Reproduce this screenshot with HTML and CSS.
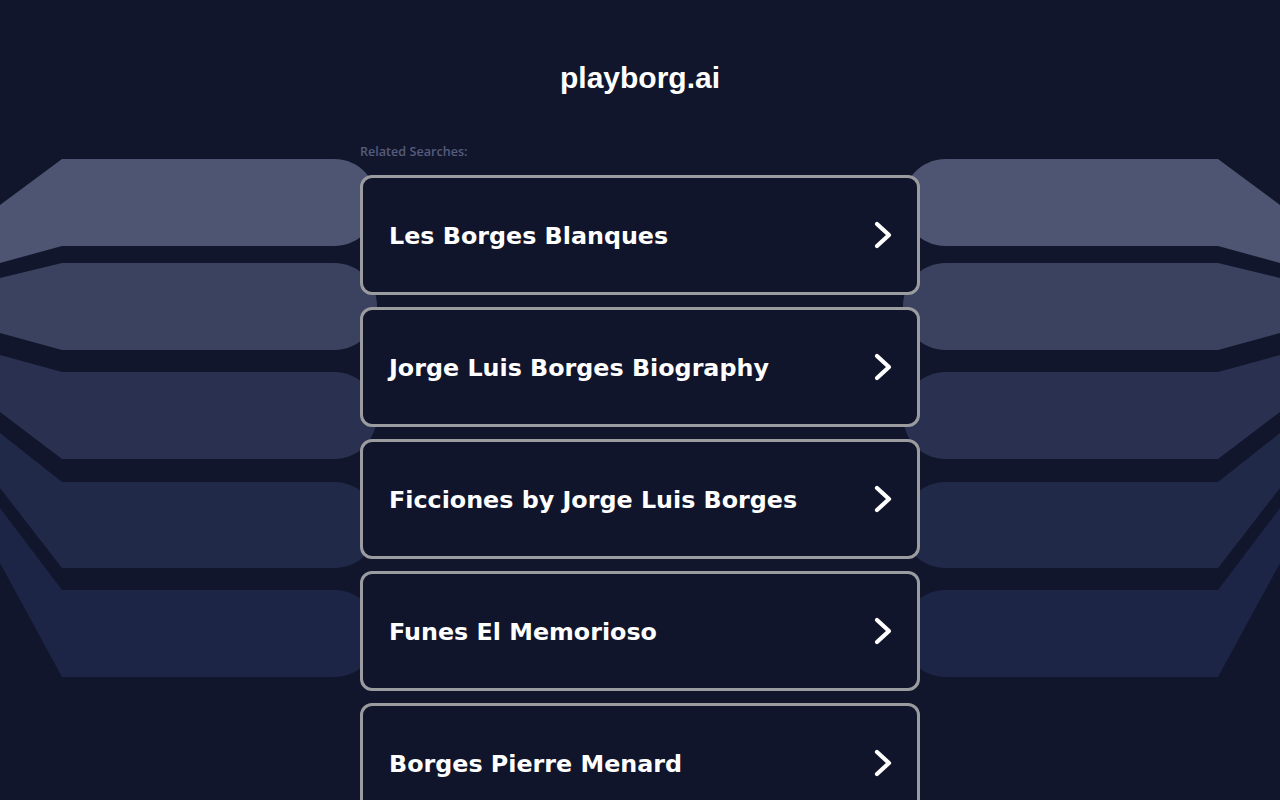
FILE: index.html
```html
<!DOCTYPE html>
<html lang="en">
<head>
<meta charset="utf-8">
<title>playborg.ai</title>
<link rel="stylesheet" href="styles.css">
</head>
<body>
<svg class="backdrop" width="1280" height="800" viewBox="0 0 1280 800" aria-hidden="true">
  <g id="bands">
    <path fill="#4d5572" d="M0,205 L62,159 L334,159 C360,159 377,180 377,202 C377,225 360,246 334,246 L62,246 L0,263 Z"/>
    <path fill="#3b4260" d="M0,278 L62,263 L334,263 C360,263 377,284 377,306 C377,329 360,350 334,350 L62,350 L0,333 Z"/>
    <path fill="#2a3150" d="M0,355 L62,372 L334,372 C360,372 377,393 377,415 C377,438 360,459 334,459 L62,459 L0,412 Z"/>
    <path fill="#212949" d="M0,433 L62,482 L334,482 C360,482 377,503 377,525 C377,548 360,568 334,568 L62,568 L0,488 Z"/>
    <path fill="#1d2546" d="M0,508 L62,590 L334,590 C360,590 377,611 377,633 C377,656 360,677 334,677 L62,677 L0,563 Z"/>
  </g>
  <g transform="translate(1280,0) scale(-1,1)">
    <path fill="#4d5572" d="M0,205 L62,159 L334,159 C360,159 377,180 377,202 C377,225 360,246 334,246 L62,246 L0,263 Z"/>
    <path fill="#3b4260" d="M0,278 L62,263 L334,263 C360,263 377,284 377,306 C377,329 360,350 334,350 L62,350 L0,333 Z"/>
    <path fill="#2a3150" d="M0,355 L62,372 L334,372 C360,372 377,393 377,415 C377,438 360,459 334,459 L62,459 L0,412 Z"/>
    <path fill="#212949" d="M0,433 L62,482 L334,482 C360,482 377,503 377,525 C377,548 360,568 334,568 L62,568 L0,488 Z"/>
    <path fill="#1d2546" d="M0,508 L62,590 L334,590 C360,590 377,611 377,633 C377,656 360,677 334,677 L62,677 L0,563 Z"/>
  </g>
</svg>

<main class="page">
  <header class="site-header">
    <h1 class="domain">playborg.ai</h1>
  </header>

  <section class="related">
    <p class="related-label">Related Searches:</p>
    <ul class="links">
      <li><a class="link-card" href="#"><span class="link-text">Les Borges Blanques</span><svg class="chev" width="20" height="28" viewBox="0 0 20 28"><path d="M4,3 L16,14 L4,25" /></svg></a></li>
      <li><a class="link-card" href="#"><span class="link-text">Jorge Luis Borges Biography</span><svg class="chev" width="20" height="28" viewBox="0 0 20 28"><path d="M4,3 L16,14 L4,25" /></svg></a></li>
      <li><a class="link-card" href="#"><span class="link-text">Ficciones by Jorge Luis Borges</span><svg class="chev" width="20" height="28" viewBox="0 0 20 28"><path d="M4,3 L16,14 L4,25" /></svg></a></li>
      <li><a class="link-card" href="#"><span class="link-text">Funes El Memorioso</span><svg class="chev" width="20" height="28" viewBox="0 0 20 28"><path d="M4,3 L16,14 L4,25" /></svg></a></li>
      <li><a class="link-card" href="#"><span class="link-text">Borges Pierre Menard</span><svg class="chev" width="20" height="28" viewBox="0 0 20 28"><path d="M4,3 L16,14 L4,25" /></svg></a></li>
    </ul>
  </section>
</main>
</body>
</html>
```

FILE: styles.css
```css
html, body {
  margin: 0;
  padding: 0;
}

body {
  background: #12162c;
  color: #ffffff;
  min-height: 800px;
  overflow: hidden;
  position: relative;
  font-family: "DejaVu Sans", Verdana, sans-serif;
}

.backdrop {
  position: absolute;
  top: 0;
  left: 0;
  z-index: 0;
}

.page {
  position: relative;
  z-index: 1;
  width: 560px;
  margin: 0 auto;
  display: flex;
  flex-direction: column;
}

.site-header {
  padding-top: 60px;
  display: flex;
  justify-content: center;
}

.domain {
  margin: 0;
  font-family: "Liberation Sans", Arial, sans-serif;
  font-weight: 700;
  font-size: 30px;
  line-height: 36px;
  color: #ffffff;
}

.related {
  margin-top: 48px;
}

.related-label {
  margin: 0 0 15px 0;
  font-family: "Open Sans", "Liberation Sans", sans-serif;
  font-size: 12.6px;
  font-weight: 600;
  line-height: 16px;
  color: #555c7c;
}

.links {
  list-style: none;
  margin: 0;
  padding: 0;
  display: flex;
  flex-direction: column;
  gap: 12px;
}

.link-card {
  box-sizing: border-box;
  height: 120px;
  display: flex;
  align-items: center;
  justify-content: space-between;
  padding: 2px 24px 0 26px;
  border: 3px solid #9b9ca0;
  border-radius: 12px;
  background: #11152b;
  color: #ffffff;
  text-decoration: none;
}

.link-text {
  font-family: "DejaVu Sans", Verdana, sans-serif;
  font-weight: 700;
  font-size: 23.8px;
  line-height: 30px;
  color: #ffffff;
}

.chev {
  display: block;
  flex: none;
  margin-top: -2px;
}

.chev path {
  fill: none;
  stroke: #ffffff;
  stroke-width: 4.2;
  stroke-linecap: round;
  stroke-linejoin: round;
}
```
